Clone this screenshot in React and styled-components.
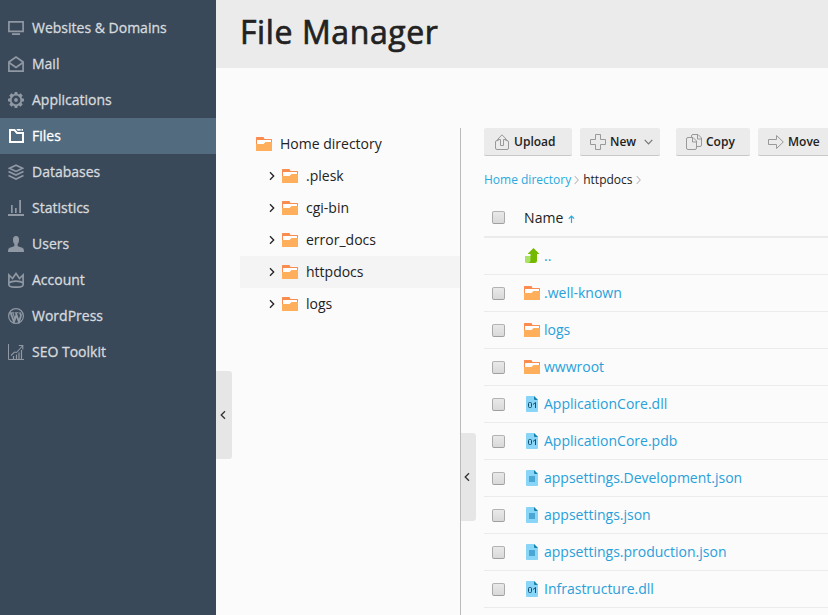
import React from "react";
import styled, { createGlobalStyle, css } from "styled-components";

const Global = createGlobalStyle`
  * { box-sizing: border-box; }
  html, body { margin: 0; padding: 0; overflow: hidden; }
  body { font-family: "Open Sans", "Noto Sans", sans-serif; font-size: 14px; color: #222; background: #fbfbfb; }
  svg { display: block; flex: none; }
`;

const Page = styled.div`
  display: flex;
  width: 828px;
  height: 615px;
  overflow: hidden;
  background: #fbfbfb;
`;

const Sidebar = styled.nav`
  flex: none;
  width: 216px;
  padding-top: 10px;
  background: #3a4959;
`;

const NavItem = styled.a`
  display: flex;
  align-items: center;
  gap: 8px;
  height: 36px;
  padding-left: 8px;
  white-space: nowrap;
  color: ${(p) => (p.$active ? "#fff" : "#d6dade")};
  background: ${(p) => (p.$active ? "#536b7e" : "transparent")};
  svg { color: ${(p) => (p.$active ? "#fff" : "#8f98a3")}; }
`;

const NavLabel = styled.span`
  padding-bottom: 2px;
  -webkit-text-stroke: 0.3px currentColor;
`;

const Main = styled.main`
  position: relative;
  flex: 1;
  min-width: 0;
  display: flex;
  flex-direction: column;
`;

const Header = styled.header`
  flex: none;
  height: 68px;
  padding: 10px 0 0 24px;
  background: #ebebeb;
`;

const Title = styled.h1`
  margin: 0;
  font-size: 32px;
  line-height: 44px;
  font-weight: 400;
  letter-spacing: 0.6px;
  -webkit-text-stroke: 0.7px currentColor;
  color: #222;
`;

const Body = styled.div`
  flex: 1;
  display: flex;
  padding: 60px 0 0 24px;
  min-height: 0;
`;

const Tree = styled.div`
  flex: none;
  width: 221px;
  border-right: 1px solid #bbb;
`;

const TreeRow = styled.div`
  display: flex;
  align-items: center;
  height: 32px;
  padding-left: ${(p) => (p.$root ? 16 : 28)}px;
  background: ${(p) => (p.$selected ? "#f4f4f4" : "transparent")};
`;

const TreeLabel = styled.span`
  margin-left: 8px;
  padding-bottom: 2px;
  white-space: nowrap;
`;

const Content = styled.section`
  flex: 1;
  min-width: 0;
  padding-left: 23px;
  overflow: hidden;
`;

const Toolbar = styled.div`
  display: flex;
  width: 420px;
  height: 28px;
`;

const Button = styled.button`
  flex: none;
  display: flex;
  align-items: center;
  width: ${(p) => p.$w}px;
  height: 28px;
  margin: 0 ${(p) => p.$after || 8}px 0 0;
  padding: 0 0 0 10px;
  border: 0;
  border-bottom: 1px solid #c8c8c8;
  border-radius: 2px;
  background: #ebebeb;
  color: #222;
  font: 600 12px/18px "Open Sans", sans-serif;
  white-space: nowrap;
  svg { color: #999; }
`;

const ButtonLabel = styled.span`
  margin-left: 4px;
`;

const Caret = styled.span`
  margin-left: 8px;
  svg { color: #777; }
`;

const Crumbs = styled.div`
  display: flex;
  align-items: center;
  height: 18px;
  margin-top: 14px;
  margin-bottom: 1px;
  font-size: 12px;
  white-space: nowrap;
  svg { margin: 2px 4px 0 3px; color: #bbb; }
`;

const Crumb = styled.span`
  color: ${(p) => (p.$link ? "#28aade" : "#222")};
`;

const row = css`
  display: flex;
  align-items: center;
  padding-left: 8px;
`;

const HeadRow = styled.div`
  ${row}
  height: 49px;
  padding-top: 9px;
  border-bottom: 2px solid #ebebeb;
`;

const FileRow = styled.div`
  ${row}
  height: 37px;
  border-bottom: 1px solid #ebebeb;
  color: #28a0da;
`;

const Check = styled.span`
  flex: none;
  width: 13px;
  height: 13px;
  margin-right: 19px;
  border: 1px solid #aaa;
  border-color: #b3b3b3 #aaa #9f9f9f;
  border-radius: 2px;
  background: linear-gradient(#e9e9e9, #d9d9d9);
  visibility: ${(p) => (p.$hidden ? "hidden" : "visible")};
`;

const FileName = styled.span`
  margin-left: 4px;
  padding-bottom: 2px;
  white-space: nowrap;
`;

const HeadName = styled.span`
  letter-spacing: 0.1px;
  margin-right: 4px;
`;

const SortArrow = styled.span`
  padding-top: 3px;
  color: #28aade;
`;

const Handle = styled.div`
  position: absolute;
  left: ${(p) => p.$left}px;
  top: ${(p) => p.$top}px;
  display: flex;
  align-items: center;
  width: ${(p) => p.$w}px;
  height: 88px;
  padding-left: ${(p) => p.$pad}px;
  border-radius: 0 3px 3px 0;
  background: #e6e6e6;
`;

const Svg = ({ w = 16, h = 16, children, ...rest }) => (
  <svg width={w} height={h} viewBox={`0 0 ${w} ${h}`} fill="none" stroke="currentColor" {...rest}>
    {children}
  </svg>
);

const fill = { fill: "currentColor", stroke: "none" };

const gear =
  "M6.700 0h2.600l.4 2 1.100.5L12.500 1.300l2.200 2.200-1.200 1.700.5 1.100 2 .4v2.600l-2 .4-.5 1.100 1.200 1.700-2.200 2.200-1.700-1.200-1.100.5-.4 2H6.700l-.4-2-1.100-.5-1.700 1.200-2.200-2.200 1.200-1.700-.5-1.100-2-.4V6.700l2-.4.5-1.100-1.200-1.700 2.200-2.200 1.700 1.200 1.100-.5zM8 3.600a4.400 4.400 0 1 0 0 8.800 4.400 4.400 0 0 0 0-8.800z";

const icons = {
  monitor: <Svg><path d="M.9 1.900h14.200v9.400H.9z" strokeWidth="1.700" /><path d="M4 13.200h8V15H4z" {...fill} /></Svg>,
  mail: <Svg strokeWidth="1.700"><path d="M.9 6L8 1l7.100 5v9.100H.9z" /><path d="M1 6.500l7 5 7-5" /></Svg>,
  gear: <Svg><path d={gear} {...fill} fillRule="evenodd" /><circle cx="8" cy="8" r="1.900" {...fill} /></Svg>,
  folder: <Svg><path d="M2 2.100h4.500L9 5h6v8.900H2z" strokeWidth="2" /><path d="M8.300 1h4.400v1.800H9.600zM13.500 1H15v1.800h-1.500z" {...fill} /></Svg>,
  layers: <Svg strokeWidth="1.700"><path d="M1.500 4.300L8 1.200l6.500 3.100L8 7.400z" /><path d="M.5 7.600L8 11.100l7.500-3.500M.5 11.500L8 15l7.500-3.500" /></Svg>,
  stats: <Svg {...fill}><path d="M0 14h16v2H0zM3 5h1.700v8H3zM7 8h1.700v5H7zM11.200 0H13v13h-1.800z" /></Svg>,
  user: <Svg {...fill}><path d="M8 0c2.200 0 3 1.600 3 3.800 0 2-.5 3.400-1.400 4.300v2c1.500 1 5 1.300 5.900 2.600.4.700.5 2.300.5 3.300H0c0-1 .1-2.600.5-3.300.9-1.300 4.400-1.600 5.900-2.600v-2C5.500 7.200 5 5.800 5 3.800 5 1.600 5.800 0 8 0z" /></Svg>,
  crown: <Svg strokeWidth="1.700"><path d="M.9 3v9.700c0 1.500 3.200 2.500 7.100 2.500s7.100-1 7.100-2.500V3l-3.600 3.500L8 1.500 4.500 6.500z" /><path d="M1 11c1.500-1.400 4-1.900 7-1.900s5.500.5 7 1.900" /></Svg>,
  wordpress: (
    <Svg><circle cx="8" cy="8" r="7.400" strokeWidth="1.200" />
      <path d="M2.700 5L6 13.800 8.200 7.500M7.900 5l3 8.800 1.900-5.600c.4-1.500-.9-2.300-.7-3.900" strokeWidth="1.900" />
      <path d="M1.500 4.700h4.800M6.900 4.700h3.700M4.800 5l2.400 6.200" strokeWidth="1.100" />
    </Svg>
  ),
  seo: (
    <Svg><path d="M.5 0v15.500H16" /><path d="M3 11.500L6.500 8l2 .5L14.500 2M10.800 1.500h4v4" strokeWidth="1.100" />
      <path d="M5.500 12v3M8.500 10.500V15M11 8.500V15M13.500 6v9" strokeWidth="1.200" />
    </Svg>
  ),
};

const Folder = () => (
  <svg width="16" height="16" viewBox="0 0 16 16">
    <path d="M0 1.500Q0 1 .5 1H7.500L8.500 3H15.500Q16 3 16 3.500V9H0z" fill="#fb8c50" />
    <path d="M1 4h14v4H1z" fill="#fff" />
    <path d="M0 8h7.500L9.500 6H16v8.500Q16 15 15.500 15H.5Q0 15 0 14.500z" fill="#ffae5b" />
  </svg>
);

const Sheet = ({ children }) => (
  <svg width="16" height="16" viewBox="0 0 16 16">
    <path d="M2 1Q2 0 3 0h7l4 4v11q0 1-1 1H3q-1 0-1-1z" fill="#89d5f7" />
    <path d="M10 0l4 4h-3q-1 0-1-1z" fill="#1581ae" />
    {children}
  </svg>
);

const BinFile = () => (
  <Sheet>
    <g fill="none" stroke="#164f6b">
      <rect x="4.500" y="6.500" width="3" height="5" rx="1" />
      <path d="M9 8.500l2.500-2V12" />
    </g>
  </Sheet>
);

const TextFile = () => (
  <Sheet><path d="M5 6h6v6H5z" fill="#4aa7d3" /></Sheet>
);

const UpArrow = () => (
  <svg width="16" height="16" viewBox="0 0 16 16">
    <path d="M1 8h6v7H2.500Q1 15 1 13.500z" fill="#a9e264" />
    <path d="M9.500 0L15 5.500V6h-2v6.500Q13 15 10.500 15H4q2.500-.5 2.500-2.500V6H4v-.5z" fill="#74b800" />
  </svg>
);

const fileIcons = { folder: <Folder />, bin: <BinFile />, text: <TextFile />, up: <UpArrow /> };

const HandleChevron = () => (
  <Svg w={6} h={10} stroke="#333" strokeWidth="1.300"><path d="M5 1.200L1.200 5 5 8.800" /></Svg>
);

const CrumbArrow = () => (
  <Svg w={5} h={10}><path d="M.7 1l3.500 4L.7 9" strokeWidth="1.100" /></Svg>
);

const nav = [
  ["Websites & Domains", "monitor"],
  ["Mail", "mail"],
  ["Applications", "gear"],
  ["Files", "folder"],
  ["Databases", "layers"],
  ["Statistics", "stats"],
  ["Users", "user"],
  ["Account", "crown"],
  ["WordPress", "wordpress"],
  ["SEO Toolkit", "seo"],
];

const tree = [".plesk", "cgi-bin", "error_docs", "httpdocs", "logs"];

const files = [
  ["..", "up"],
  [".well-known", "folder"],
  ["logs", "folder"],
  ["wwwroot", "folder"],
  ["ApplicationCore.dll", "bin"],
  ["ApplicationCore.pdb", "bin"],
  ["appsettings.Development.json", "text"],
  ["appsettings.json", "text"],
  ["appsettings.production.json", "text"],
  ["Infrastructure.dll", "bin"],
];

export default function App() {
  return (
    <>
      <Global />
      <Page>
        <Sidebar>
          {nav.map(([label, icon]) => (
            <NavItem key={label} $active={label === "Files"}>
              {icons[icon]}
              <NavLabel>{label}</NavLabel>
            </NavItem>
          ))}
        </Sidebar>
        <Main>
          <Header><Title>File Manager</Title></Header>
          <Body>
            <Tree>
              <TreeRow $root><Folder /><TreeLabel>Home directory</TreeLabel></TreeRow>
              {tree.map((name) => (
                <TreeRow key={name} $selected={name === "httpdocs"}>
                  <Svg w={14} h={10} stroke="#222" strokeWidth="1.300"><path d="M2 1.300L5.700 5 2 8.700" /></Svg>
                  <Folder />
                  <TreeLabel>{name}</TreeLabel>
                </TreeRow>
              ))}
            </Tree>
            <Content>
              <Toolbar>
                <Button $w={88}>
                  <Svg><path d="M4.500 6.500H3Q1.500 6.500 1.500 8v6q0 1.500 1.500 1.500h10q1.500 0 1.500-1.500V8q0-1.500-1.500-1.500h-1.500M6.500 11.500v-6h-3L8 .8l4.500 4.700h-3v6z" /></Svg>
                  <ButtonLabel>Upload</ButtonLabel>
                </Button>
                <Button $w={80} $after={16}>
                  <Svg><path d="M5.500.5h5v5h5v5h-5v5h-5v-5h-5v-5h5z" /></Svg>
                  <ButtonLabel>New</ButtonLabel>
                  <Caret><Svg w={9} h={6}><path d="M.7.800l3.800 4 3.800-4" strokeWidth="1.200" /></Svg></Caret>
                </Button>
                <Button $w={74}>
                  <Svg><path d="M5.500 3.500V2Q5.500.5 7 .5h5l3.500 3.500v7q0 1.500-1.500 1.500h-3.500M11.500.5V5h4M2 3.500h5l3.500 3.500v7q0 1.500-1.500 1.500H2Q.5 15.500.5 14V5Q.5 3.500 2 3.500zM6.500 3.500V8h4" /></Svg>
                  <ButtonLabel>Copy</ButtonLabel>
                </Button>
                <Button $w={84}>
                  <Svg><path d="M.5 5.500h8v-4L15.300 8l-6.800 6.500v-4h-8z" /></Svg>
                  <ButtonLabel>Move</ButtonLabel>
                </Button>
              </Toolbar>
              <Crumbs>
                <Crumb $link>Home directory</Crumb>
                <CrumbArrow />
                <Crumb>httpdocs</Crumb>
                <CrumbArrow />
              </Crumbs>
              <HeadRow>
                <Check />
                <HeadName>Name</HeadName>
                <SortArrow>
                  <Svg w={7} h={8}><path d="M3.500 8V1M.8 3.700L3.500 1l2.700 2.700" strokeWidth="1.200" /></Svg>
                </SortArrow>
              </HeadRow>
              {files.map(([name, kind]) => (
                <FileRow key={name}>
                  <Check $hidden={kind === "up"} />
                  {fileIcons[kind]}
                  <FileName>{name}</FileName>
                </FileRow>
              ))}
            </Content>
          </Body>
          <Handle $left={0} $top={371} $w={16} $pad={4}><HandleChevron /></Handle>
          <Handle $left={245} $top={433} $w={15} $pad={3}><HandleChevron /></Handle>
        </Main>
      </Page>
    </>
  );
}
